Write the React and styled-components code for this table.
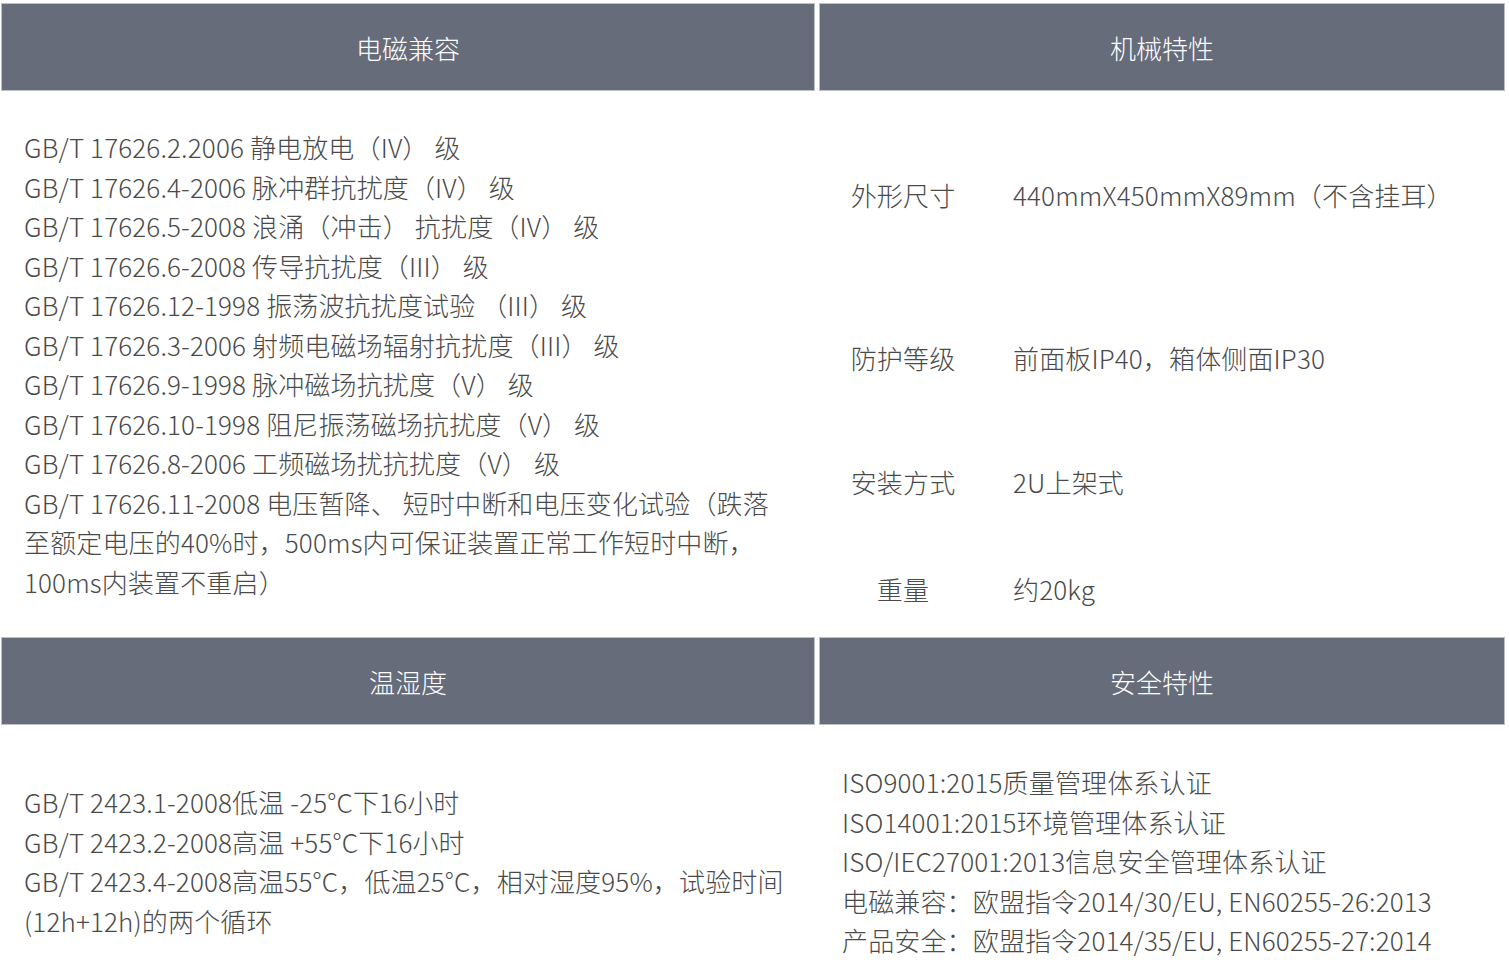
import React from 'react';
import styled, {createGlobalStyle} from 'styled-components';

const GlobalStyle = createGlobalStyle`
    html, body {
        margin: 0;
        padding: 0;
        background: #ffffff;
    }
    body {
        font-family: "Noto Sans CJK SC", "Noto Sans", sans-serif;
    }
`;

const Sheet = styled.div`
    display: grid;
    grid-template-columns: 814px 686px;
    grid-template-rows: 88px 546px 88px 272px;
    column-gap: 4px;
    padding: 3px 0 0 1px;
    width: 1504px;
`;

const Head = styled.div`
    background-color: #666c79;
    border: 1px solid #bcc1c8;
    box-sizing: border-box;
    color: #ffffff;
    font-size: 26px;
    font-weight: 300;
    display: flex;
    align-items: center;
    justify-content: center;
`;

const Body = styled.div`
    display: flex;
    flex-direction: column;
    justify-content: center;
    padding: 0 23px;
    color: #4a4a4a;
    font-size: 26px;
    font-weight: 300;
    letter-spacing: 0.15px;
    line-height: 39.5px;
`;

const Line = styled.div`
    white-space: nowrap;
`;

const SpecTable = styled.div`
    display: grid;
    grid-template-columns: 168px 1fr;
    align-content: start;
    color: #4a4a4a;
    font-size: 26px;
    font-weight: 300;
    letter-spacing: 0.15px;
    line-height: 39.5px;
`;

const SpecCell = styled.div`
    height: ${props => props.h}px;
    display: flex;
    align-items: center;
    justify-content: ${props => props.label ? 'center' : 'flex-start'};
    padding-left: ${props => props.label ? 0 : 26}px;
    white-space: nowrap;
`;

const emcLines = [
    'GB/T 17626.2.2006 静电放电（IV） 级',
    'GB/T 17626.4-2006 脉冲群抗扰度（IV） 级',
    'GB/T 17626.5-2008 浪涌（冲击） 抗扰度（IV） 级',
    'GB/T 17626.6-2008 传导抗扰度（III） 级',
    'GB/T 17626.12-1998 振荡波抗扰度试验 （III） 级',
    'GB/T 17626.3-2006 射频电磁场辐射抗扰度（III） 级',
    'GB/T 17626.9-1998 脉冲磁场抗扰度（V） 级',
    'GB/T 17626.10-1998 阻尼振荡磁场抗扰度（V） 级',
    'GB/T 17626.8-2006 工频磁场扰抗扰度（V） 级',
    'GB/T 17626.11-2008 电压暂降、 短时中断和电压变化试验（跌落',
    '至额定电压的40%时，500ms内可保证装置正常工作短时中断，',
    '100ms内装置不重启）',
];

const mechRows = [
    {label: '外形尺寸', value: '440mmX450mmX89mm（不含挂耳）', h: 208},
    {label: '防护等级', value: '前面板IP40，箱体侧面IP30', h: 118},
    {label: '安装方式', value: '2U上架式', h: 130},
    {label: '重量', value: '约20kg', h: 84},
];

const climateLines = [
    'GB/T 2423.1-2008低温 -25°C下16小时',
    'GB/T 2423.2-2008高温 +55°C下16小时',
    'GB/T 2423.4-2008高温55°C，低温25°C，相对湿度95%，试验时间',
    '(12h+12h)的两个循环',
];

const safetyLines = [
    'ISO9001:2015质量管理体系认证',
    'ISO14001:2015环境管理体系认证',
    'ISO/IEC27001:2013信息安全管理体系认证',
    '电磁兼容：欧盟指令2014/30/EU, EN60255-26:2013',
    '产品安全：欧盟指令2014/35/EU, EN60255-27:2014',
];

export default function App() {
    return (
        <>
            <GlobalStyle />
            <Sheet>
                <Head>电磁兼容</Head>
                <Head>机械特性</Head>

                <Body>
                    {emcLines.map(l => <Line key={l}>{l}</Line>)}
                </Body>
                <SpecTable>
                    {mechRows.map(r => (
                        <React.Fragment key={r.label}>
                            <SpecCell label h={r.h}>{r.label}</SpecCell>
                            <SpecCell h={r.h}>{r.value}</SpecCell>
                        </React.Fragment>
                    ))}
                </SpecTable>

                <Head>温湿度</Head>
                <Head>安全特性</Head>

                <Body>
                    {climateLines.map(l => <Line key={l}>{l}</Line>)}
                </Body>
                <Body>
                    {safetyLines.map(l => <Line key={l}>{l}</Line>)}
                </Body>
            </Sheet>
        </>
    );
} // App
